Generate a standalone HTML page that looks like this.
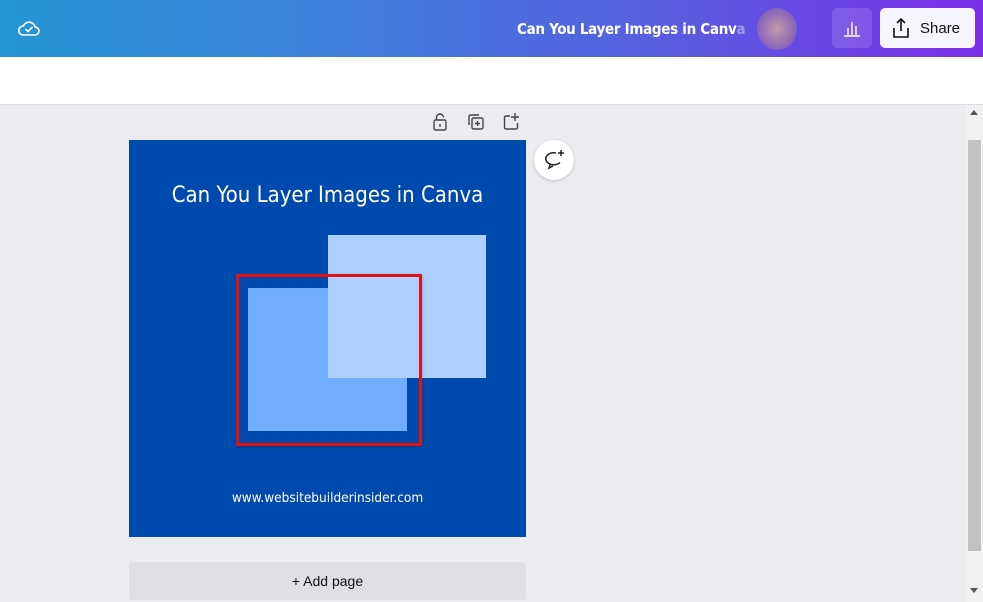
<!DOCTYPE html>
<html><head><style>
body{margin:0;width:983px;height:602px;overflow:hidden;background:#ebecf0;font-family:"Liberation Sans",sans-serif;position:relative}
.top{position:absolute;left:0;top:0;width:983px;height:57px;background:linear-gradient(90deg,#2596d6 0%,#3f7fdc 35%,#5a5ae0 70%,#7d2ee8 100%)}
.bar2{position:absolute;left:0;top:57px;width:983px;height:47px;background:#fff;border-bottom:1px solid #dcdde2}
.abs{position:absolute}
</style></head><body>
<div class="top">
<svg class="abs" style="left:17px;top:17px" width="24" height="22" viewBox="0 0 24 22" fill="none" stroke="#fff" stroke-width="1.6"><path d="M6 18h12a4 4 0 0 0 0-8 6 6 0 0 0-11.5-1A4.5 4.5 0 0 0 6 18z"/><path d="M8.5 12l2.5 2.5 4.5-4.5"/></svg>
<div class="abs" style="left:517px;top:20px;color:#fff;font-weight:bold;font-size:15px;white-space:nowrap;font-family:'DejaVu Sans Condensed','Liberation Sans',sans-serif;letter-spacing:-0.3px">Can You Layer Images in Canv<span style="opacity:.4">a</span></div>
<div class="abs" style="left:757px;top:8px;width:40px;height:42px;border-radius:50%;background:radial-gradient(#c09aa8,#8f6ab8 60%,rgba(110,75,225,0) 100%)"></div>
<div class="abs" style="left:832px;top:8px;width:40px;height:40px;border-radius:5px;background:rgba(255,255,255,.13)"></div>
<svg class="abs" style="left:842px;top:18px" width="20" height="20" viewBox="0 0 20 20" stroke="#fff" stroke-width="1.4"><path d="M2 18h16M6 17V10M10 17V4M14 17V8"/></svg>
<div class="abs" style="left:880px;top:8px;width:95px;height:40px;border-radius:5px;background:#f6f4fd"></div>
<svg class="abs" style="left:892px;top:17px" width="18" height="22" viewBox="0 0 18 22" fill="none" stroke="#111" stroke-width="1.6"><path d="M9 2v12M5 6l4-4 4 4M2 11v9h14v-9"/></svg>
<div class="abs" style="left:920px;top:20px;font-size:15px;color:#111">Share</div>
</div>
<div class="bar2"></div>
<svg class="abs" style="left:432px;top:113px" width="16" height="18" viewBox="0 0 16 18" fill="none" stroke="#444" stroke-width="1.4"><rect x="2" y="7" width="12" height="10" rx="1.5"/><path d="M4.5 7V4.5a3.5 3.5 0 0 1 7 0"/><path d="M8 11v3"/></svg>
<svg class="abs" style="left:467px;top:113px" width="18" height="18" viewBox="0 0 18 18" fill="none" stroke="#444" stroke-width="1.4"><rect x="5" y="5" width="11" height="11" rx="1.5"/><path d="M12 2H3.5A1.5 1.5 0 0 0 2 3.5V12M10.5 8v5M8 10.5h5"/></svg>
<svg class="abs" style="left:502px;top:112px" width="18" height="18" viewBox="0 0 18 18" fill="none" stroke="#444" stroke-width="1.4"><path d="M8 4H4a1.5 1.5 0 0 0-1.5 1.5v10A1.5 1.5 0 0 0 4 17h10a1.5 1.5 0 0 0 1.5-1.5V11M13 1v8M9 5h8"/></svg>
<div class="abs" style="left:534px;top:140px;width:40px;height:40px;border-radius:50%;background:#fff;box-shadow:0 1px 3px rgba(0,0,0,.2)"></div>
<svg class="abs" style="left:543px;top:147px" width="24" height="24" viewBox="0 0 24 24" fill="none" stroke="#222" stroke-width="1.5"><path d="M13 6a8 6 0 1 0 4 9.5M7 18l-1 3 4-2"/><path d="M18 3v6M15 6h6"/></svg>
<div class="abs" style="left:129px;top:140px;width:397px;height:397px;background:#004aad"></div>
<div class="abs" style="left:129px;top:183px;width:397px;text-align:center;color:#fff;font-size:22px;font-family:'DejaVu Sans Condensed','Liberation Sans',sans-serif">Can You Layer Images in Canva</div>
<div class="abs" style="left:248px;top:288px;width:159px;height:143px;background:#72aeff"></div>
<div class="abs" style="left:328px;top:235px;width:158px;height:143px;background:#aed0ff"></div>
<div class="abs" style="left:236px;top:274px;width:180px;height:166px;border:3px solid #e21212;box-shadow:0 1px 3px rgba(0,0,0,.3)"></div>
<div class="abs" style="left:129px;top:490px;width:397px;text-align:center;color:#fff;font-size:13.5px;font-family:'DejaVu Sans Condensed','Liberation Sans',sans-serif">www.websitebuilderinsider.com</div>
<div class="abs" style="left:129px;top:562px;width:397px;height:38px;background:#dfe0e5;border-radius:3px;text-align:center;line-height:38px;font-size:14px;color:#111">+ Add page</div>
<div class="abs" style="left:966px;top:105px;width:17px;height:497px;background:#f1f1f1"></div>
<div class="abs" style="left:968px;top:140px;width:13px;height:411px;background:#c1c1c1"></div>
<div class="abs" style="left:970px;top:110px;width:0;height:0;border:4px solid transparent;border-bottom:5px solid #555;border-top:0"></div>
<div class="abs" style="left:970px;top:588px;width:0;height:0;border:4px solid transparent;border-top:5px solid #555;border-bottom:0"></div>
</body></html>
